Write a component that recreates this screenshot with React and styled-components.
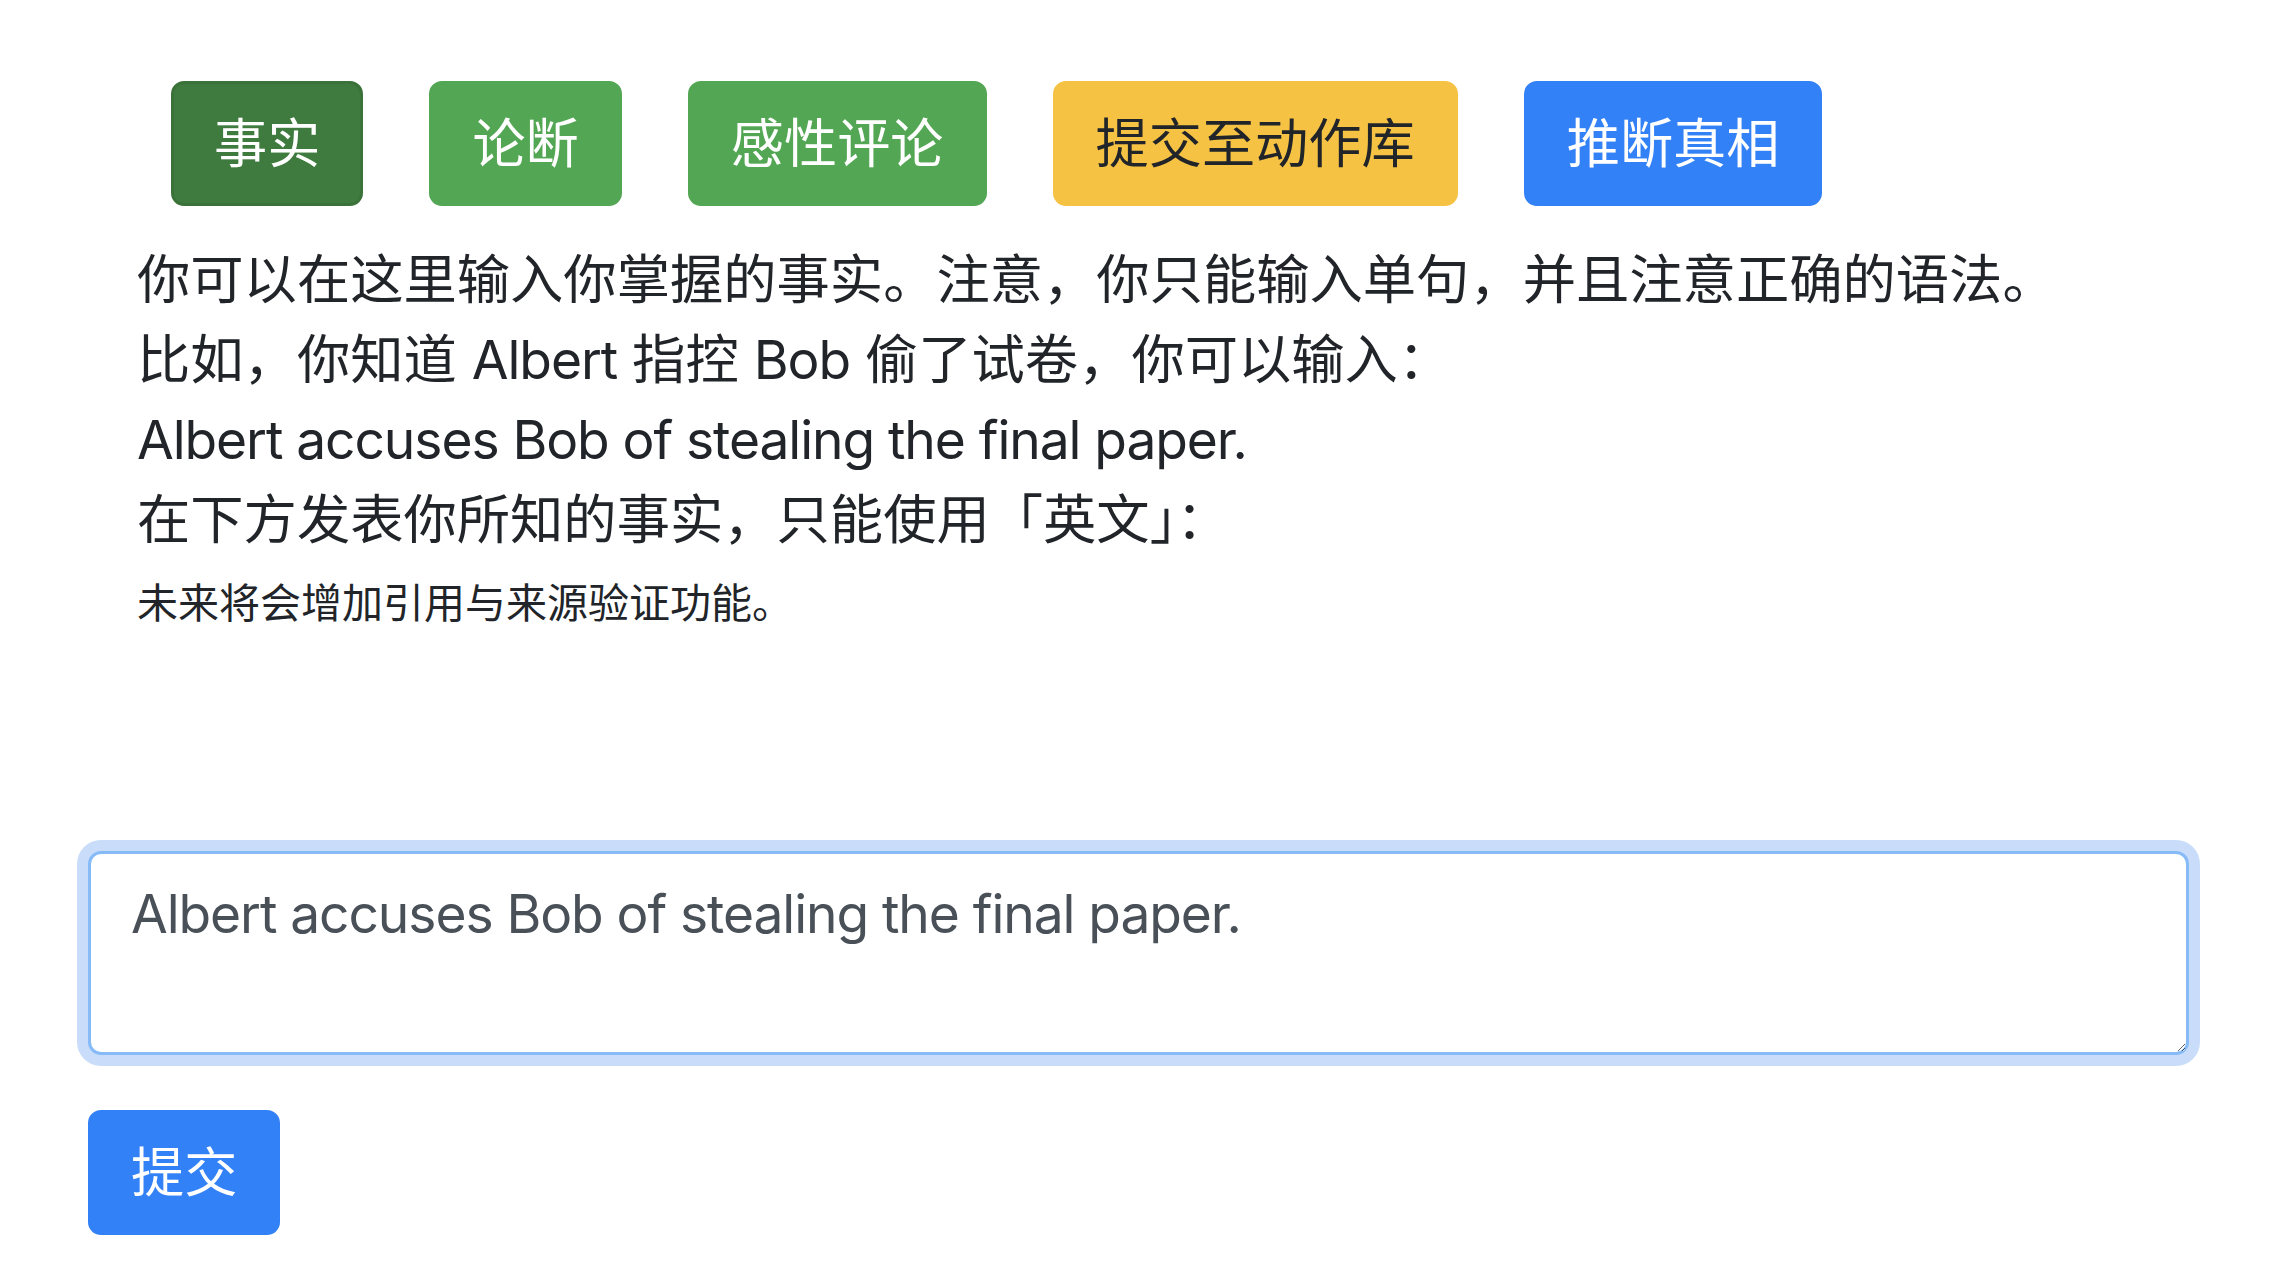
import React, { useEffect, useRef, useState } from "react";
import styled, { createGlobalStyle, css } from "styled-components";

const GlobalStyle = createGlobalStyle`
  html, body {
    margin: 0;
    padding: 0;
    background: #ffffff;
  }
  body {
    font-family: Inter, "Noto Sans CJK SC", sans-serif;
    color: #212529;
  }
  * { box-sizing: border-box; }
`;

const Page = styled.div`
  padding: 81px 89px 40px 88px;
  display: flex;
  flex-direction: column;
`;

const Toolbar = styled.div`
  display: flex;
  gap: 66px;
  padding-left: 83px;
`;

const variants = {
  successActive: css`
    background: #3f7b3f;
    border-color: #3a723a;
    color: #ffffff;
  `,
  success: css`
    background: #53a653;
    border-color: #53a653;
    color: #ffffff;
  `,
  warning: css`
    background: #f6c244;
    border-color: #f6c244;
    color: #212529;
  `,
  primary: css`
    background: #3381f6;
    border-color: #3381f6;
    color: #ffffff;
  `,
};

const Button = styled.button`
  font-family: Inter, "Noto Sans CJK SC", sans-serif;
  font-size: 53.2px;
  line-height: 79px;
  font-weight: 400;
  padding: 20px 40px;
  border: 3px solid transparent;
  border-radius: 13px;
  cursor: pointer;
  white-space: nowrap;
  ${(p) => variants[p.$variant]}
`;

const Intro = styled.div`
  margin-top: 34px;
  padding-left: 49px;
  font-size: 53.3px;
  line-height: 80px;
  color: #212529;
`;

const Line = styled.div`
  white-space: nowrap;
`;

const Latin = styled.span`
  letter-spacing: -0.02em;
`;

const Note = styled.div`
  margin-top: 3px;
  font-size: 41px;
  line-height: 80px;
  white-space: nowrap;
`;

const Form = styled.form`
  margin-top: 208px;
  display: flex;
  flex-direction: column;
  align-items: flex-start;
`;

const TextArea = styled.textarea`
  width: 100%;
  height: 204px;
  font-family: Inter, "Noto Sans CJK SC", sans-serif;
  font-size: 53.3px;
  letter-spacing: -0.02em;
  line-height: 79px;
  color: #495057;
  caret-color: #495057;
  padding: 20px 40px;
  border: 3px solid #87bbf7;
  border-radius: 13px;
  box-shadow: 0 0 0 11px #c9ddfb;
  outline: none;
  background: #ffffff;
  resize: both;
`;

const SubmitButton = styled(Button)`
  margin-top: 55px;
`;

const tabs = [
  { label: "事实", variant: "successActive" },
  { label: "论断", variant: "success" },
  { label: "感性评论", variant: "success" },
  { label: "提交至动作库", variant: "warning" },
  { label: "推断真相", variant: "primary" },
];

export default function App() {
  const [text, setText] = useState("Albert accuses Bob of stealing the final paper.");
  const ref = useRef(null);

  useEffect(() => {
    const el = ref.current;
    if (el) {
      el.focus();
      const n = el.value.length;
      el.setSelectionRange(n, n);
    }
  }, []);

  return (
    <>
      <GlobalStyle />
      <Page>
        <Toolbar>
          {tabs.map((t) => (
            <Button key={t.label} type="button" $variant={t.variant}>
              {t.label}
            </Button>
          ))}
        </Toolbar>
        <Intro>
          <Line>你可以在这里输入你掌握的事实。注意，你只能输入单句，并且注意正确的语法。</Line>
          <Line>
            比如，你知道 <Latin>Albert</Latin> 指控 <Latin>Bob</Latin> 偷了试卷，你可以输入：
          </Line>
          <Line>
            <Latin>Albert accuses Bob of stealing the final paper.</Latin>
          </Line>
          <Line>在下方发表你所知的事实，只能使用「英文」：</Line>
          <Note>未来将会增加引用与来源验证功能。</Note>
        </Intro>
        <Form onSubmit={(e) => e.preventDefault()}>
          <TextArea
            ref={ref}
            rows={2}
            value={text}
            onChange={(e) => setText(e.target.value)}
          />
          <SubmitButton type="submit" $variant="primary">
            提交
          </SubmitButton>
        </Form>
      </Page>
    </>
  );
}
